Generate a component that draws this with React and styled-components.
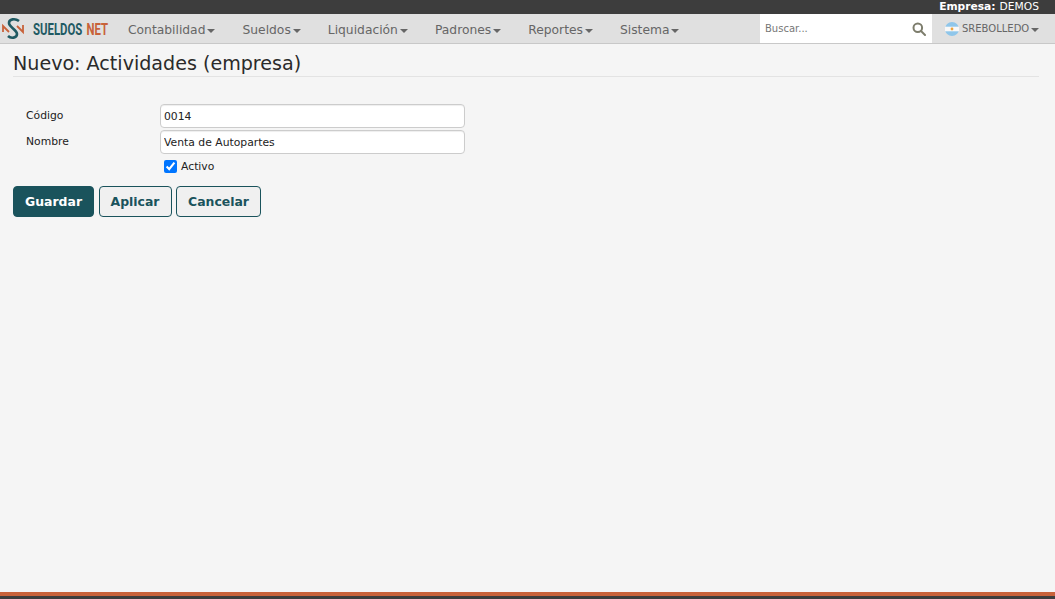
import React from 'react'
import styled, {createGlobalStyle} from 'styled-components'

const MENU = ['Contabilidad', 'Sueldos', 'Liquidación', 'Padrones', 'Reportes', 'Sistema']

const GlobalStyle = createGlobalStyle`
    html, body {
        margin: 0;
        height: 100%;
        overflow: hidden;
    }
    body {
        background: #f5f5f5;
        font-family: 'DejaVu Sans', Verdana, sans-serif;
        color: #222;
    }
`

const Page = styled.div`
    display: flex;
    flex-direction: column;
    height: 599px;
`

const TopBar = styled.div`
    display: flex;
    justify-content: flex-end;
    height: 14px;
    padding-right: 16px;
    background: #3d3d3d;
    color: #fff;
    font-size: 10.7px;
    line-height: 14px;
    b {
        margin-right: 4px;
    }
`

const NavBar = styled.nav`
    display: flex;
    align-items: stretch;
    height: 29px;
    background: #e0e0e0;
    border-bottom: 1px solid #c8c8c8;
`

const Brand = styled.div`
    display: flex;
    align-items: center;
    width: 114px;
    padding-left: 2px;
    box-sizing: border-box;
`

const MenuList = styled.div`
    display: flex;
    flex: 1;
    padding-left: 14px;
    gap: 27px;
`

const MenuItem = styled.div`
    display: flex;
    align-items: center;
    padding-top: 2px;
    color: #666;
    font-size: 12.3px;
`

const Caret = styled.span`
    display: inline-block;
    margin-left: 2px;
    margin-top: 2px;
    border-top: 4px solid #666;
    border-left: 4px solid transparent;
    border-right: 4px solid transparent;
`

const Search = styled.div`
    display: flex;
    align-items: center;
    justify-content: space-between;
    width: 172px;
    padding: 0 6px 0 5px;
    box-sizing: border-box;
    background: #fff;
    color: #777;
    font-size: 10px;
`

const UserMenu = styled.div`
    display: flex;
    align-items: center;
    width: 123px;
    padding-left: 13px;
    box-sizing: border-box;
    color: #666;
    font-size: 10px;
    svg {
        margin-right: 3px;
    }
`

const Main = styled.main`
    flex: 1;
    padding: 8px 16px 0 13px;
`

const Title = styled.h1`
    margin: 0;
    height: 24px;
    border-bottom: 1px solid #e3e3e3;
    font-size: 19.1px;
    font-weight: 400;
    line-height: 23px;
    color: #2a2a2a;
`

const Form = styled.form`
    display: flex;
    flex-direction: column;
    margin-top: 27px;
`

const Row = styled.div`
    display: flex;
    align-items: flex-start;
    height: 26px;
`

const Label = styled.label`
    width: 147px;
    padding-left: 13px;
    box-sizing: border-box;
    font-size: 10.8px;
    line-height: 23px;
`

const Field = styled.input`
    width: 305px;
    height: 24px;
    padding: 0 3px;
    box-sizing: border-box;
    border: 1px solid #ccc;
    border-radius: 4px;
    background: #fff;
    box-shadow: inset 0 1px 1px rgba(0,0,0,.07);
    font-family: inherit;
    font-size: 10.8px;
    color: #222;
    outline: none;
`

const CheckRow = styled.label`
    display: flex;
    align-items: center;
    margin-left: 151px;
    height: 20px;
    font-size: 10.8px;
    input {
        width: 13px;
        height: 13px;
        margin: 0 4px 0 0;
        accent-color: #0075ff;
    }
`

const Actions = styled.div`
    display: flex;
    gap: 4.5px;
    margin-top: 10px;
`

const Button = styled.button`
    height: 31px;
    padding: 0 11px;
    border: 1px solid #1a535c;
    border-radius: 4px;
    background: ${p => p.$primary ? '#1a535c' : '#f0f0f0'};
    color: ${p => p.$primary ? '#fff' : '#1a535c'};
    font-family: inherit;
    font-size: 12.45px;
    font-weight: 700;
`

const Footer = styled.footer`
    height: 3px;
    background: #3d3d3d;
    border-top: 4px solid #c8623a;
`

const Logo = () => (
    <svg width="108" height="26" viewBox="0 0 108 26">
        <path d="M1 16V10l6 6" fill="none" stroke="#c8623a" strokeWidth="1.8" />
        <path d="M15 10l6 6V9" fill="none" stroke="#c8623a" strokeWidth="1.8" />
        <path d="M17 5C13 2 7 3 7 7 7 11 15 14 15 18 15 22 9 23 6 20" fill="none" stroke="#1f5a63" strokeWidth="2.6" />
        <text transform="translate(31 18.5) scale(.67 1)" fontFamily="Roboto" fontWeight="700" fontSize="17" fill="#1f5a63">
            SUELDOS <tspan dx="2" fill="#c8623a">NET</tspan>
        </text>
    </svg>
)

const Flag = () => (
    <svg width="14" height="14" viewBox="0 0 14 14">
        <circle cx="7" cy="7" r="7" fill="#8fc6ea" />
        <rect x="0" y="4.7" width="14" height="4.6" fill="#f8f8f8" />
        <circle cx="7" cy="7" r="1.4" fill="#eda23c" />
    </svg>
)

const SearchIcon = () => (
    <svg width="14" height="14" viewBox="0 0 14 14" fill="none" stroke="#7d7d6c" strokeWidth="2">
        <circle cx="5.8" cy="5.8" r="4.3" />
        <path d="M9 9l4 4" strokeLinecap="round" />
    </svg>
)

export default function App() {
    return (
        <Page>
            <GlobalStyle />
            <TopBar><b>Empresa:</b> DEMOS</TopBar>
            <NavBar>
                <Brand><Logo /></Brand>
                <MenuList>
                    {MENU.map(item => <MenuItem key={item}>{item}<Caret /></MenuItem>)}
                </MenuList>
                <Search>Buscar...<SearchIcon /></Search>
                <UserMenu><Flag />SREBOLLEDO<Caret /></UserMenu>
            </NavBar>
            <Main>
                <Title>Nuevo: Actividades (empresa)</Title>
                <Form>
                    <Row><Label>Código</Label><Field defaultValue="0014" /></Row>
                    <Row><Label>Nombre</Label><Field defaultValue="Venta de Autopartes" /></Row>
                    <CheckRow><input type="checkbox" defaultChecked />Activo</CheckRow>
                    <Actions>
                        <Button type="button" $primary>Guardar</Button>
                        <Button type="button">Aplicar</Button>
                        <Button type="button">Cancelar</Button>
                    </Actions>
                </Form>
            </Main>
            <Footer />
        </Page>
    )
}
